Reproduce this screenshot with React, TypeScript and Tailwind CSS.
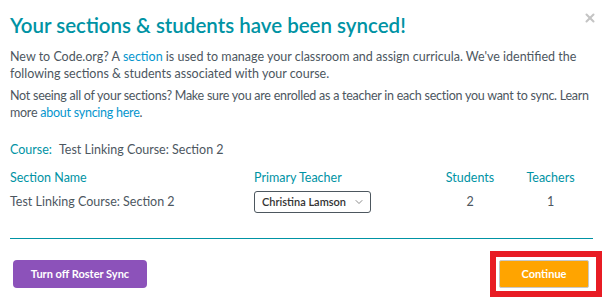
import { X, ChevronDown } from "lucide-react";

const font = { fontFamily: "Lato, 'Noto Sans', sans-serif" };

export default function App() {
  return (
    <div className="w-[604px] h-[301px] bg-white relative overflow-hidden text-[#4d575f]" style={font}>
      <button className="absolute right-[7px] top-[11px] text-[#c4c4c4]">
        <X className="w-[14px] h-[14px]" strokeWidth={3.5} />
      </button>

      <div className="px-[10px] pt-[12px]">
        <h1 className="text-[20.5px] leading-[26px] font-semibold text-[#0093a4]">
          Your sections &amp; students have been synced!
        </h1>

        <p className="mt-[11px] text-[12.5px] leading-[16.5px]">
          New to Code.org? A <a className="text-[#0596ce]">section</a> is used to manage your classroom and assign curricula. We've identified the following sections &amp; students associated with your course.
        </p>
        <p className="mt-[6px] w-[594px] text-[12.5px] leading-[16.5px] tracking-[-0.25px]">
          Not seeing all of your sections? Make sure you are enrolled as a teacher in each section you want to sync. Learn more <a className="text-[#0596ce]">about syncing here</a>.
        </p>

        <div className="mt-[21px] text-[12.5px] leading-[16px]">
          <span className="text-[#0093a4]">Course:</span>
          <span className="ml-[7px]">Test Linking Course: Section 2</span>
        </div>

        <div className="mt-[12px] grid grid-cols-[244px_181px_70px_91px] text-[12.5px] leading-[16px]">
          <div className="text-[#0093a4]">Section Name</div>
          <div className="text-[#0093a4]">Primary Teacher</div>
          <div className="text-[#0093a4] text-center">Students</div>
          <div className="text-[#0093a4] text-center">Teachers</div>

          <div className="pt-[8px]">Test Linking Course: Section 2</div>
          <div className="pt-[5px]">
            <div className="w-[117px] h-[22px] border border-[#4d575f] rounded-[3px] flex items-center justify-between pl-[7px] pr-[5px] text-[11px] font-semibold text-[#333]">
              <span>Christina Lamson</span>
              <ChevronDown className="w-[12px] h-[12px] text-[#666]" strokeWidth={1.5} />
            </div>
          </div>
          <div className="pt-[8px] text-center">2</div>
          <div className="pt-[8px] text-center">1</div>
        </div>

        <div className="mt-[25px] h-px bg-[#0093a4] w-[583px]" />

        <div className="mt-[12px] flex items-center justify-between">
          <button className="ml-[3px] w-[134px] h-[28px] rounded-[4px] bg-[#8c52ba] text-white text-[11px] font-bold">
            Turn off Roster Sync
          </button>
          <div className="mr-[-8px] border-[6px] border-[#e81c24] pl-[3px] pr-[7px] py-[3px]">
            <button className="w-[90px] h-[28px] rounded-[2px] bg-[#ffa400] border border-[#c8c8c8] text-white text-[11px] font-bold">
              Continue
            </button>
          </div>
        </div>
      </div>
    </div>
  );
}
